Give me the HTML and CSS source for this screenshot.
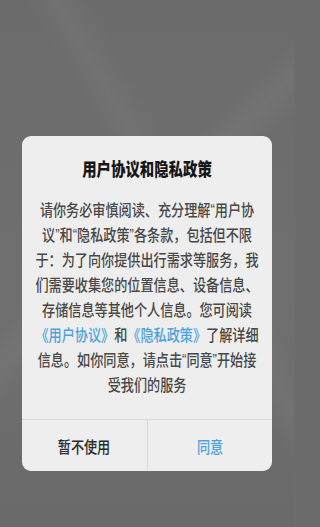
FILE: index.html
```html
<!DOCTYPE html>
<html lang="zh-CN">
<head>
<meta charset="utf-8">
<title>用户协议和隐私政策</title>
<link rel="stylesheet" href="styles.css">
</head>
<body>
<div class="screen">
  <div class="dialog">
    <h1 class="title">用户协议和隐私政策</h1>
    <p class="content">请你务必审慎阅读、充分理解“用户协<br>议”和“隐私政策”各条款，包括但不限<br>于：为了向你提供出行需求等服务，我<br>们需要收集您的位置信息、设备信息、<br>存储信息等其他个人信息。您可阅读<br><a class="link">《用户协议》</a>和<a class="link">《隐私政策》</a>了解详细<br>信息。如你同意，请点击“同意”开始接<br>受我们的服务</p>
    <div class="actions">
      <button class="btn btn-cancel"><span class="label">暂不使用</span></button>
      <button class="btn btn-ok"><span class="label">同意</span></button>
    </div>
  </div>
</div>
</body>
</html>
```

FILE: styles.css
```css
html, body {
  margin: 0;
  padding: 0;
  background: #6c6c6c;
}
body {
  width: 294px;
  height: 527px;
  overflow: hidden;
  font-family: "Liberation Sans", "Noto Sans CJK SC", sans-serif;
}
.screen {
  width: 294px;
  height: 527px;
  box-sizing: border-box;
  padding-top: 136px;
  background:
    linear-gradient(135deg, rgba(255,255,255,0) 40%, rgba(255,255,255,0.04) 45%, rgba(255,255,255,0) 50%),
    linear-gradient(60deg, rgba(255,255,255,0) 55%, rgba(255,255,255,0.035) 60%, rgba(255,255,255,0) 66%),
    linear-gradient(180deg, #6c6c6c 0%, #6f6f6f 60%, #6a6a6a 100%);
  display: flex;
  justify-content: center;
  align-items: flex-start;
}
.dialog {
  width: 250px;
  background: #eeeeee;
  border-radius: 9px;
  display: flex;
  flex-direction: column;
  align-items: center;
  overflow: hidden;
}
.title {
  margin: 0;
  padding-top: 22px;
  font-size: 18px;
  line-height: 24px;
  font-weight: 900;
  color: #161616;
  text-align: center;
  white-space: nowrap;
  transform: scaleX(0.8);
}
.content {
  margin: 0;
  padding: 16px 0 21px;
  width: max-content;
  font-size: 16px;
  line-height: 25px;
  font-weight: 500;
  color: #484848;
  text-align: center;
  white-space: nowrap;
  transform: scaleX(0.82);
}
.link {
  color: #4ba3dc;
  text-decoration: none;
}
.actions {
  align-self: stretch;
  display: flex;
  border-top: 1px solid #d9d9d9;
  height: 51px;
}
.btn {
  flex: 1;
  margin: 0;
  padding: 0;
  border: none;
  background: transparent;
  font-family: "Liberation Sans", "Noto Sans CJK SC", sans-serif;
  font-size: 16px;
  font-weight: 500;
  cursor: pointer;
}
.label {
  display: inline-block;
  transform: scaleX(0.82);
}
.btn-cancel {
  color: #2a2a2a;
  border-right: 1px solid #d9d9d9;
}
.btn-ok {
  color: #4ba3dc;
}
```
